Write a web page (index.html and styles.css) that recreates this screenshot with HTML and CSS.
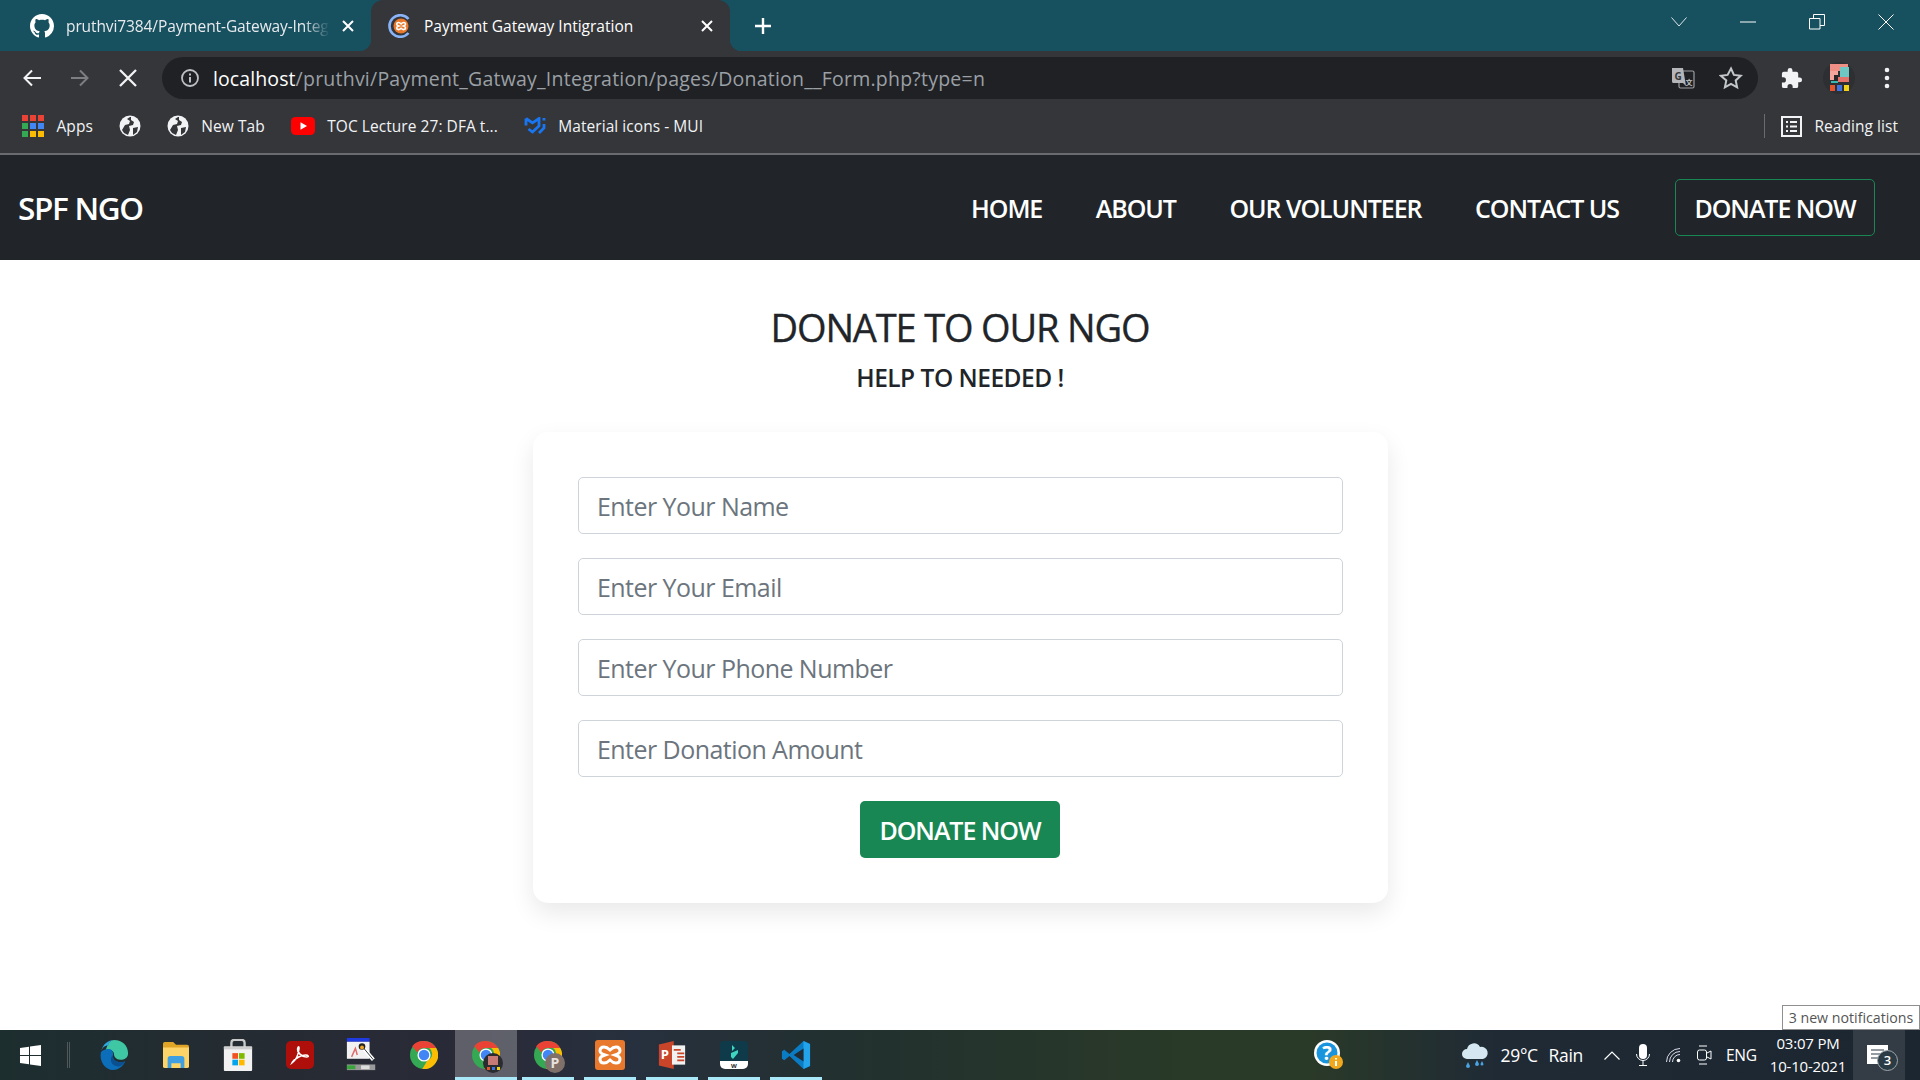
FILE: index.html
```html
<!DOCTYPE html>
<html lang="en">
<head>
<meta charset="utf-8">
<title>Payment Gateway Intigration</title>
<link rel="stylesheet" href="styles.css">
</head>
<body>
<div class="tabstrip">
  <div class="tab">
    <svg width="24" height="24" viewBox="0 0 16 16"><path fill="#fff" d="M8 0C3.58 0 0 3.58 0 8c0 3.54 2.29 6.53 5.47 7.59.4.07.55-.17.55-.38 0-.19-.01-.82-.01-1.49-2.01.37-2.53-.49-2.69-.94-.09-.23-.48-.94-.82-1.13-.28-.15-.68-.52-.01-.53.63-.01 1.08.58 1.23.82.72 1.21 1.87.87 2.33.66.07-.52.28-.87.51-1.07-1.78-.2-3.64-.89-3.64-3.95 0-.87.31-1.59.82-2.15-.08-.2-.36-1.02.08-2.12 0 0 .67-.21 2.2.82.64-.18 1.32-.27 2-.27.68 0 1.36.09 2 .27 1.53-1.04 2.2-.82 2.2-.82.44 1.1.16 1.92.08 2.12.51.56.82 1.27.82 2.15 0 3.07-1.87 3.75-3.65 3.95.29.25.54.73.54 1.48 0 1.07-.01 1.93-.01 2.2 0 .21.15.46.55.38A8.013 8.013 0 0016 8c0-4.42-3.58-8-8-8z"/></svg>
    <span class="tab-title tab-title-fade">pruthvi7384/Payment-Gateway-Integration</span>
    <svg class="tab-close" width="14" height="14" viewBox="0 0 14 14"><path d="M2 2l10 10M12 2L2 12" stroke="#fff" stroke-width="2"/></svg>
  </div>
  <div class="tab tab-active">
    <svg width="24" height="24" viewBox="0 0 24 24"><path d="M20.500 5A10.800 10.800 0 1 0 20.500 19" fill="none" stroke="#8ab4f8" stroke-width="2.600"/><circle cx="13" cy="12" r="7.500" fill="#e8792c"/><path transform="translate(6.500 5.500) scale(.44)" d="M9 7C11 7 13 8 15 10C17 8 19 7 21 7C24 7 25 9 25 11C25 13 23 14 20 15C23 16 25 17 25 19C25 22 23 23 21 23C19 23 17 22 15 20C13 22 11 23 9 23C6 23 5 21 5 19C5 17 7 16 10 15C7 14 5 13 5 11C5 8 7 7 9 7Z" fill="none" stroke="#fff" stroke-width="3.500"/></svg>
    <span class="tab-title">Payment Gateway Intigration</span>
    <svg class="tab-close" width="14" height="14" viewBox="0 0 14 14"><path d="M2 2l10 10M12 2L2 12" stroke="#fff" stroke-width="2"/></svg>
  </div>
  <div class="newtab"><svg width="20" height="20" viewBox="0 0 20 20"><path d="M10 2v16M2 10h16" stroke="#fff" stroke-width="2.400"/></svg></div>
  <div class="winctl">
    <span class="winbtn"><svg width="16" height="10" viewBox="0 0 16 10"><path d="M.5.500l7.500 8.500 7.500-8.500" fill="none" stroke="#dfe6e9" stroke-width="1"/></svg></span>
    <span class="winbtn"><svg width="16" height="2" viewBox="0 0 16 2"><path d="M0 1h16" stroke="#fff" stroke-width="1"/></svg></span>
    <span class="winbtn"><svg width="16" height="16" viewBox="0 0 16 16"><path d="M.5 4.500h10.500v10.500H.5zM4.500 4.500V.5h11v11H11" fill="none" stroke="#fff" stroke-width="1"/></svg></span>
    <span class="winbtn"><svg width="16" height="16" viewBox="0 0 16 16"><path d="M.5.500l15 15M15.500.500l-15 15" stroke="#fff" stroke-width="1"/></svg></span>
  </div>
</div>

<div class="toolbar">
  <span class="slot"><svg width="20" height="20" viewBox="0 0 20 20"><path d="M19 10H3M10 2.500L2.500 10l7.500 7.500" fill="none" stroke="#f1f3f4" stroke-width="2"/></svg></span>
  <span class="slot"><svg width="20" height="20" viewBox="0 0 20 20"><path d="M1 10h16M10 2.500l7.500 7.500-7.500 7.500" fill="none" stroke="#7c7e81" stroke-width="2"/></svg></span>
  <span class="slot"><svg width="20" height="20" viewBox="0 0 20 20"><path d="M2 2l16 16M18 2L2 18" stroke="#f1f3f4" stroke-width="2.300"/></svg></span>
  <div class="omnibox">
    <svg width="20" height="20" viewBox="0 0 20 20"><circle cx="10" cy="10" r="8" fill="none" stroke="#bdc1c6" stroke-width="1.800"/><path d="M10 9v5.500M10 5.500v2" stroke="#bdc1c6" stroke-width="2"/></svg>
    <span class="url"><span class="url-host">localhost</span>/pruthvi/Payment_Gatway_Integration/pages/Donation__Form.php?type=n</span>
    <span class="slot"><svg width="24" height="24" viewBox="0 0 24 24"><rect x="8" y="5" width="15" height="17" rx="1.500" fill="none" stroke="#9c9fa3" stroke-width="1.200"/><path d="M1 2h11l3 18-3-3H2.500A1.500 1.500 0 0 1 1 15.500z" fill="#b4b6b9"/><text class="tr-g" x="3.500" y="13.500">G</text><text class="tr-x" x="14.500" y="19">文</text></svg></span>
    <span class="slot"><svg width="24" height="24" viewBox="0 0 24 24"><path d="M12 2.500l2.900 6.400 6.900.8-5.100 4.700 1.400 6.900-6.100-3.500-6.100 3.500 1.400-6.900L1.700 9.700l6.900-.8z" fill="none" stroke="#c4c7ca" stroke-width="2"/></svg></span>
  </div>
  <span class="slot"><svg width="23" height="23" viewBox="0 0 24 24"><path fill="#f1f3f4" d="M20.500 11H19V7a2 2 0 0 0-2-2h-4V3.500a2.500 2.500 0 0 0-5 0V5H4a2 2 0 0 0-2 2v3.800h1.500a2.700 2.700 0 0 1 0 5.400H2V20a2 2 0 0 0 2 2h3.800v-1.500a2.700 2.700 0 0 1 5.400 0V22H17a2 2 0 0 0 2-2v-4h1.500a2.500 2.500 0 0 0 0-5z"/></svg></span>
  <span class="slot"><svg width="32" height="32" viewBox="0 0 32 32"><circle cx="16" cy="16" r="16" fill="#2e2f33"/><rect x="7" y="2" width="18" height="7" fill="#ef8f86"/><rect x="17" y="5" width="9" height="10" fill="#6fc7c4"/><rect x="7" y="9" width="8" height="9" fill="#f2a69e"/><rect x="11" y="13" width="4" height="8" fill="#26282b"/><rect x="15" y="15" width="11" height="5" fill="#e2726a"/><rect x="8" y="19" width="7" height="2" fill="#38b6b0"/><rect x="7" y="23" width="5" height="6" fill="#e4572e"/><rect x="14" y="23" width="5" height="6" fill="#3f74e0"/><rect x="21" y="23" width="5" height="6" fill="#f0d318"/></svg></span>
  <span class="slot"><svg width="6" height="22" viewBox="0 0 6 22"><circle cx="3" cy="3" r="2.300" fill="#f1f3f4"/><circle cx="3" cy="11" r="2.300" fill="#f1f3f4"/><circle cx="3" cy="19" r="2.300" fill="#f1f3f4"/></svg></span>
</div>

<div class="bookmarks">
  <span class="bm">
    <svg width="22" height="22" viewBox="0 0 22 22"><rect width="6" height="6" fill="#ea4335"/><rect x="8" width="6" height="6" fill="#ea4335"/><rect x="16" width="6" height="6" fill="#ea4335"/><rect y="8" width="6" height="6" fill="#34a853"/><rect x="8" y="8" width="6" height="6" fill="#4285f4"/><rect x="16" y="8" width="6" height="6" fill="#4285f4"/><rect y="16" width="6" height="6" fill="#34a853"/><rect x="8" y="16" width="6" height="6" fill="#fbbc04"/><rect x="16" y="16" width="6" height="6" fill="#fbbc04"/></svg>
    Apps
  </span>
  <span class="bm"><svg class="globe" width="22" height="22" viewBox="0 0 22 22"><circle cx="11" cy="11" r="10.500" fill="#f1f3f4"/><path d="M3 15l3-5 4-1 1-3-3-2 3-2 1 0v3l3 2-1 3-4 1 1 4-2 5-4-2z" fill="#35363a"/><path d="M14 13l5-1-1 5-4 3z" fill="#35363a"/></svg></span>
  <span class="bm"><svg class="globe" width="22" height="22" viewBox="0 0 22 22"><circle cx="11" cy="11" r="10.500" fill="#f1f3f4"/><path d="M3 15l3-5 4-1 1-3-3-2 3-2 1 0v3l3 2-1 3-4 1 1 4-2 5-4-2z" fill="#35363a"/><path d="M14 13l5-1-1 5-4 3z" fill="#35363a"/></svg>New Tab</span>
  <span class="bm"><svg width="24" height="18" viewBox="0 0 24 18"><rect width="24" height="18" rx="4.500" fill="#f00"/><path d="M9.500 5.200v7.600l6.500-3.800z" fill="#fff"/></svg>TOC Lecture 27: DFA t...</span>
  <span class="bm"><svg width="22" height="18" viewBox="0 0 22 18"><path d="M2 1.500v7M2 1.500l6.500 4.300 6.500-4.300v7.500l-6.500 6-4-3" fill="none" stroke="#1976f2" stroke-width="2.800"/><path d="M20 1v2.500M20 7v4l-5 5" fill="none" stroke="#1976f2" stroke-width="2.800"/></svg>Material icons - MUI</span>
  <span class="bm-spacer"></span>
  <span class="bm-divider"></span>
  <span class="bm bm-reading"><svg width="21" height="21" viewBox="0 0 21 21"><rect x="1" y="1" width="19" height="19" fill="none" stroke="#f1f3f4" stroke-width="2"/><path d="M5 6h2M5 10.500h2M5 15h2M9 6h7M9 10.500h7M9 15h7" stroke="#f1f3f4" stroke-width="2"/></svg>Reading list</span>
</div>

<nav class="navbar">
  <a class="brand">SPF NGO</a>
  <div class="navlinks">
    <a class="navlink">HOME</a>
    <a class="navlink">ABOUT</a>
    <a class="navlink">OUR VOLUNTEER</a>
    <a class="navlink">CONTACT US</a>
    <a class="navbtn">DONATE NOW</a>
  </div>
</nav>

<main class="page">
  <h2 class="title">DONATE TO OUR NGO</h2>
  <h5 class="subtitle">HELP TO NEEDED !</h5>
  <form class="card">
    <input class="field" type="text" placeholder="Enter Your Name">
    <input class="field" type="text" placeholder="Enter Your Email">
    <input class="field" type="text" placeholder="Enter Your Phone Number">
    <input class="field" type="text" placeholder="Enter Donation Amount">
    <button class="submit" type="button">DONATE NOW</button>
  </form>
</main>

<div class="taskbar">
  <span class="tb-start"><svg width="21" height="21" viewBox="0 0 21 21"><path fill="#fff" d="M0 3l9-1.300V10H0zM10 1.500L21 0v10H10zM0 11h9v8.300L0 18zM10 11h11v10l-11-1.500z"/></svg></span>
  <span class="tb-sep"></span>
  <span class="tb-item"><svg width="30" height="30" viewBox="0 0 30 32"><path d="M15 0c9 0 15 6 15 14 0 5-4 7-8 7-5 0-7-3-7-6 0-4-5-6-9-3C8 4 11 0 15 0z" fill="#3fc6a3"/><path d="M1 13C3 4 9 0 15 0c-6 1-6 5-5 6-4-1-8 2-9 7z" fill="#2fa8e0"/><path d="M1 13c3-4 14-6 13 3-1 7 7 9 13 7-3 6-8 9-13 9C6 32-1 23 1 13z" fill="#0c6db8"/><path d="M14 16c-1 7 7 9 13 7-2 3-5 6-9 5-7-1-8-9-4-12z" fill="#0a4f8f"/></svg></span>
  <span class="tb-item"><svg width="28" height="26" viewBox="0 0 28 28"><path d="M0 2a2 2 0 0 1 2-2h9l3 3h12a2 2 0 0 1 2 2v3H0z" fill="#e0a526"/><path d="M0 6h28v20a2 2 0 0 1-2 2H2a2 2 0 0 1-2-2z" fill="#fcd468"/><path d="M5 28V18a3 3 0 0 1 3-3h12a3 3 0 0 1 3 3v10h-4v-5H9v5z" fill="#3f9fe0"/></svg></span>
  <span class="tb-item"><svg width="30" height="32" viewBox="0 0 30 34"><path d="M8 9V4a3 3 0 0 1 3-3h8a3 3 0 0 1 3 3v5" fill="none" stroke="#c9c9c9" stroke-width="2.500"/><rect y="8" width="30" height="26" rx="1" fill="#f2f2f2"/><rect y="8" width="30" height="3" fill="#cfcfcf"/><rect x="9" y="15" width="6" height="6" fill="#f25022"/><rect x="16" y="15" width="6" height="6" fill="#7fba00"/><rect x="9" y="22" width="6" height="6" fill="#00a4ef"/><rect x="16" y="22" width="6" height="6" fill="#ffb900"/></svg></span>
  <span class="tb-item"><svg width="28" height="28" viewBox="0 0 28 28"><rect width="28" height="28" rx="5" fill="#ae0f0a"/><path d="M6 22c3-2 6-7 7-14 .3-3-1-3-1.500 0-.5 3 4 8 9 8 3 0 2-2-1-2-4 0-10 3-13 7z" fill="none" stroke="#fff" stroke-width="1.500"/></svg></span>
  <span class="tb-item"><svg width="32" height="34" viewBox="0 0 32 36"><rect x="0" y="0" width="24" height="4" fill="#1e3ae0"/><rect x="0" y="4" width="24" height="18" fill="#f2f2f2"/><path d="M5 20l4-9 2 7" fill="none" stroke="#e06a6a" stroke-width="1.500"/><path d="M16 9l12 14" stroke="#fff" stroke-width="4"/><path d="M18 11l10 12" stroke="#333" stroke-width="1"/><circle cx="16" cy="9" r="3.500" fill="#222"/><circle cx="16" cy="10" r="2" fill="#f5a623"/><rect x="0" y="28" width="30" height="6" fill="#999"/><rect x="0" y="29" width="9" height="4" fill="#3aa53a"/><rect x="15" y="29" width="9" height="4" fill="#ddd"/></svg></span>
  <span class="tb-item"><svg class="chrome" width="28" height="28" viewBox="0 0 32 32"><use href="#chrome-mark"/></svg></span>
  <span class="tb-item tb-active"><span class="chrome-stack"><svg width="28" height="28" viewBox="0 0 32 32"><use href="#chrome-mark"/></svg><svg class="chrome-badge" width="20" height="20" viewBox="0 0 20 20"><circle cx="10" cy="10" r="10" fill="#2b2c30"/><rect x="5" y="3" width="10" height="9" fill="#c77a76"/><rect x="4" y="14" width="3" height="3" fill="#e4572e"/><rect x="9" y="14" width="3" height="3" fill="#3f74e0"/><rect x="14" y="14" width="3" height="3" fill="#f0d318"/></svg></span></span>
  <span class="tb-item tb-open"><span class="chrome-stack"><svg width="28" height="28" viewBox="0 0 32 32"><use href="#chrome-mark"/></svg><svg class="chrome-badge" width="20" height="20" viewBox="0 0 20 20"><circle cx="10" cy="10" r="10" fill="#80706a"/><text class="badge-p" x="10" y="15" text-anchor="middle">P</text></svg></span></span>
  <span class="tb-item tb-open"><svg width="30" height="30" viewBox="0 0 30 30"><rect width="30" height="30" rx="3" fill="#e8792c"/><path d="M9 7C11 7 13 8 15 10C17 8 19 7 21 7C24 7 25 9 25 11C25 13 23 14 20 15C23 16 25 17 25 19C25 22 23 23 21 23C19 23 17 22 15 20C13 22 11 23 9 23C6 23 5 21 5 19C5 17 7 16 10 15C7 14 5 13 5 11C5 8 7 7 9 7Z" fill="none" stroke="#fff" stroke-width="3"/></svg></span>
  <span class="tb-item tb-open"><svg width="28" height="28" viewBox="0 0 30 32"><path d="M0 4l17-4v32L0 28z" fill="#c8452a"/><rect x="15" y="5" width="15" height="22" fill="#f1f1f1"/><path d="M17 10h8M21 14h8M21 18h8M21 22h8" stroke="#c8452a" stroke-width="2"/><text class="ppt-p" x="2" y="21">P</text></svg></span>
  <span class="tb-item tb-open"><svg width="28" height="28" viewBox="0 0 28 28"><path d="M0 20V4a4 4 0 0 1 4-4h20a4 4 0 0 1 4 4v16z" fill="#0f3a4a"/><path d="M12 4l3 3-3 3zM11 12l7-3v3l-5 6-2-2z" fill="#3fd6c0"/><path d="M0 20h28v3a5 5 0 0 1-5 5H5a5 5 0 0 1-5-5z" fill="#fff"/><text class="w-mark" x="14" y="27" text-anchor="middle">W</text></svg></span>
  <span class="tb-item tb-open"><svg width="30" height="30" viewBox="0 0 32 32"><path d="M24 1L9 15 3.500 10.500 1 12v8l2.500 1.500L9 17l15 14 7-3V4z" fill="#0a7cc4"/><path d="M24 1l7 3.500v23L24 31z" fill="#22a3ea"/><path d="M24 9l-10.500 7L24 23z" fill="#1f2c36"/></svg></span>
  <span class="tb-spacer"></span>
  <span class="tray-help"><svg width="30" height="30" viewBox="0 0 30 30"><circle cx="13" cy="13" r="13" fill="#fff"/><circle cx="13" cy="13" r="10.500" fill="#1a95dd"/><text class="help-q" x="13" y="20" text-anchor="middle">?</text><circle cx="22" cy="22" r="7" fill="#f2a81d"/><path d="M22 21v5M22 18v1.500" stroke="#fff" stroke-width="2"/></svg></span>
  <span class="tray-weather"><svg width="28" height="28" viewBox="0 0 28 28"><path d="M6 18a5 5 0 0 1 0-10 7 7 0 0 1 13-2 6 6 0 0 1 3 12z" fill="#d5e8f2"/><path d="M7 21l-2 4a2 2 0 0 0 4 0zM16 19l-2 4a2 2 0 0 0 4 0zM21 20l-1.500 3a1.500 1.500 0 0 0 3 0z" fill="#4aa3e0"/></svg></span>
  <span class="tray-text tray-temp">29°C</span>
  <span class="tray-text tray-rain">Rain</span>
  <span class="tray-icon"><svg width="16" height="9" viewBox="0 0 16 9"><path d="M.5 8.500L8 1l7.500 7.500" fill="none" stroke="#fff" stroke-width="1.200"/></svg></span>
  <span class="tray-icon"><svg width="14" height="22" viewBox="0 0 14 22"><rect x="3" y="0" width="8" height="15" rx="4" fill="#fff"/><path d="M.5 10a6.500 6.500 0 0 0 13 0M7 16.500V21M3 21.500h8" fill="none" stroke="#fff"/></svg></span>
  <span class="tray-icon"><svg width="15" height="15" viewBox="0 0 15 15"><path d="M.5 14A13.500 13.500 0 0 1 14 .5M3.500 14A10.500 10.500 0 0 1 14 3.500M6.500 14A7.500 7.500 0 0 1 14 6.500" fill="none" stroke="#dde" stroke-width="1"/><circle cx="12.500" cy="12.500" r="1.800" fill="#fff"/></svg></span>
  <span class="tray-icon"><svg width="15" height="22" viewBox="0 0 15 22"><path d="M2 2h8M2 20h8" stroke="#fff"/><rect x=".5" y="6" width="9" height="10" rx="2" fill="none" stroke="#fff"/><path d="M10 9l4-2v8l-4-2" fill="none" stroke="#fff"/></svg></span>
  <span class="tray-text tray-eng">ENG</span>
  <span class="tray-clock"><span>03:07 PM</span><span>10-10-2021</span></span>
  <span class="tray-notif"><svg width="21" height="20" viewBox="0 0 21 20"><path d="M0 0h21v19H0z" fill="#fff"/><path d="M4 5h13M4 9h13M4 13h9" stroke="#2a3b45" stroke-width="1.200"/></svg><span class="notif-count">3</span></span>
  <span class="tb-end"></span>
  <span class="tooltip">3 new notifications</span>
</div>

<svg class="defs" width="0" height="0"><defs><g id="chrome-mark"><circle cx="16" cy="16" r="16" fill="#34a853"/><path d="M16 0a16 16 0 0 1 13.860 8H16a8 8 0 0 0-7.500 5L2.500 6A16 16 0 0 1 16 0z" fill="#ea4335"/><path d="M29.860 8A16 16 0 0 1 14 32l6-10a8 8 0 0 0 2-14z" fill="#fbbc04"/><circle cx="16" cy="16" r="7.500" fill="#fff"/><circle cx="16" cy="16" r="6" fill="#4285f4"/></g></defs></svg>
</body>
</html>
```

FILE: styles.css
```css
* { box-sizing: border-box; }
html, body { margin: 0; padding: 0; }
body {
  width: 1920px;
  height: 1080px;
  overflow: hidden;
  display: flex;
  flex-direction: column;
  font-family: "Open Sans", "Noto Sans", sans-serif;
  color: #212529;
  background: #fff;
}
svg { display: block; flex: none; }
.defs { position: absolute; }

/* tab strip */
.tabstrip { height: 51px; background: #17505f; display: flex; flex: none; }
.tab { width: 371px; height: 51px; padding: 0 16px 0 30px; display: flex; align-items: center; color: #e8eaed; font-size: 15.5px; letter-spacing: 0; }
.tab-title { margin-left: 12px; flex: 1; min-width: 0; white-space: nowrap; overflow: hidden; }
.tab-title-fade { -webkit-mask-image: linear-gradient(90deg, #000 90%, transparent 100%); mask-image: linear-gradient(90deg, #000 90%, transparent 100%); margin-right: 11px; letter-spacing: -.1px; }
.tab-active { position: relative; width: 359px; background: #35363a; border-radius: 12px 12px 0 0; padding-left: 17px; color: #fff; }
.tab-active::before, .tab-active::after { content: ""; position: absolute; bottom: 0; width: 12px; height: 12px; }
.tab-active::before { left: -12px; background: radial-gradient(circle at 0 0, transparent 12px, #35363a 12.500px); }
.tab-active::after { right: -12px; background: radial-gradient(circle at 100% 0, transparent 12px, #35363a 12.500px); }
.tab-close { margin-right: 0; }
.newtab { width: 66px; height: 51px; display: flex; align-items: center; justify-content: center; }
.winctl { margin-left: auto; display: flex; padding-right: 0; }
.winbtn { width: 69px; height: 43px; display: flex; align-items: center; justify-content: center; }

/* toolbar */
.toolbar { height: 54px; flex: none; background: #35363a; display: flex; align-items: flex-start; padding: 6px 9px 0 8px; }
.slot { width: 48px; height: 42px; flex: none; display: flex; align-items: center; justify-content: center; }
.omnibox { flex: 1; height: 42px; margin: 0 9px 0 10px; background: #202124; border-radius: 21px; display: flex; align-items: center; padding: 0 3px 0 18px; }
.url { flex: 1; margin-left: 13px; color: #9aa0a6; font-size: 19.5px; letter-spacing: .23px; white-space: nowrap; }
.url-host { color: #fff; letter-spacing: .1px; }
.tr-g { font: 700 10px "Open Sans", sans-serif; fill: #35363a; }
.tr-x { font: 700 7px "Noto Sans CJK SC", sans-serif; fill: #c4c7ca; }

/* bookmarks */
.bookmarks { height: 50px; flex: none; background: #35363a; border-bottom: 2px solid #6a6b6e; display: flex; align-items: flex-start; padding: 10px 20px 0 22px; color: #f1f3f4; font-size: 15.5px; letter-spacing: .05px; }
.bm { display: flex; align-items: center; height: 22px; gap: 12.500px; margin-right: 26px; white-space: nowrap; }
.bm-spacer { flex: 1; }
.bm-divider { width: 1px; height: 24px; background: #6a6b6e; margin: -1px 16px 0 0; }
.bm-reading { margin-right: 2px; }

/* site navbar */
.navbar { height: 105px; flex: none; background: #212529; display: flex; align-items: center; justify-content: space-between; padding: 0 45px 0 18px; }
.brand { color: #fff; font-size: 31.500px; font-weight: 600; letter-spacing: -1.300px; }
.navlinks { display: flex; align-items: center; gap: 53.500px; }
.navlink { color: #fff; font-size: 25px; font-weight: 600; letter-spacing: -1.050px; }
.navbtn { width: 200px; height: 57px; margin-left: 2.500px; border: 1px solid #198754; border-radius: 5px; color: #fff; font-size: 25px; font-weight: 600; letter-spacing: -1.050px; display: flex; align-items: center; justify-content: center; }

/* page */
.page { flex: 1; display: flex; flex-direction: column; align-items: center; padding-top: 43px; background: #fff; }
.title { margin: 0; font-size: 38px; line-height: 48px; font-weight: 500; letter-spacing: -1.150px; -webkit-text-stroke: .35px #212529; }
.subtitle { margin: 12px 0 0; font-size: 24.500px; line-height: 30px; font-weight: 600; letter-spacing: -.5px; }
.card { width: 855px; margin-top: 39px; padding: 45px; background: #fff; border-radius: 15px; box-shadow: 0 10px 25px rgba(0, 0, 0, .09); display: flex; flex-direction: column; align-items: center; gap: 24px; }
.field { width: 100%; height: 57px; border: 1px solid #ced4da; border-radius: 5px; padding: 0 18.500px; font: 400 25px "Open Sans", sans-serif; letter-spacing: -.55px; color: #212529; background: #fff; }
.field::placeholder { color: #6c757d; opacity: 1; }
.submit { width: 200px; height: 57px; border: 0; border-radius: 5px; background: #198754; color: #fff; font: 600 25px "Open Sans", sans-serif; letter-spacing: -1.050px; padding: 0; }

/* taskbar */
.taskbar { position: relative; height: 50px; flex: none; display: flex; align-items: center; color: #fff; background: linear-gradient(90deg, #1d2e2f 0, #262b33 15%, #2a2a38 25%, #27303e 33%, #22302f 44%, #2a3a28 62%, #2a3a28 68%, #1f2a35 78%, #1c2630 100%); }
.tb-start { width: 67px; height: 50px; display: flex; align-items: center; justify-content: center; padding-right: 6px; }
.tb-sep { width: 3px; height: 26px; border-left: 1px solid #50585c; border-right: 1px solid #50585c; margin-right: 13px; }
.tb-item { position: relative; width: 62px; height: 50px; flex: none; display: flex; align-items: center; justify-content: center; }
.tb-open::after, .tb-active::after { content: ""; position: absolute; left: 5px; right: 5px; bottom: 0; height: 3px; background: #a9e8f8; }
.tb-active { background: rgba(255, 255, 255, .25); }
.tb-active::after { left: 0; right: 0; }
.chrome-stack { position: relative; display: block; width: 28px; height: 28px; }
.chrome-badge { position: absolute; left: 11px; top: 12px; }
.badge-p { font: 700 14px "Open Sans", sans-serif; fill: #e8e2de; }
.ppt-p { font: 700 15px "Open Sans", sans-serif; fill: #fff; }
.w-mark { font: 700 6px "Open Sans", sans-serif; fill: #222; }
.help-q { font: 700 20px "Open Sans", sans-serif; fill: #fff; }
.tb-spacer { flex: 1; }
.tray-help { width: 30px; margin-right: 116.500px; }
.tray-weather { width: 28px; margin-right: 12px; }
.tray-text { font-size: 17.500px; letter-spacing: -.3px; white-space: nowrap; }
.tray-temp { width: 48px; }
.tray-rain { width: 34px; margin-right: 13.500px; }
.tray-icon { width: 31px; display: flex; justify-content: center; }
.tray-eng { width: 29px; margin: 0 13px 0 6px; font-size: 15.500px; text-align: center; }
.tray-clock { width: 80px; display: flex; flex-direction: column; align-items: center; font-size: 15px; line-height: 23px; letter-spacing: -.2px; white-space: nowrap; margin-right: 5px; }
.tray-notif { position: relative; width: 52px; height: 50px; background: rgba(255, 255, 255, .1); display: flex; align-items: center; justify-content: center; padding-right: 3px; }
.notif-count { position: absolute; left: 24px; top: 20px; width: 21px; height: 21px; border: 1px solid #9fa6ab; border-radius: 50%; background: #2a3b45; font-size: 13px; font-weight: 600; line-height: 19px; text-align: center; }
.tb-end { width: 15px; height: 50px; flex: none; }
.tooltip { position: absolute; right: 0; bottom: 50px; width: 138px; height: 25px; background: #fff; border: 1px solid #8f8f8f; color: #555; font-size: 14.200px; line-height: 23px; text-align: center; white-space: nowrap; }
```
